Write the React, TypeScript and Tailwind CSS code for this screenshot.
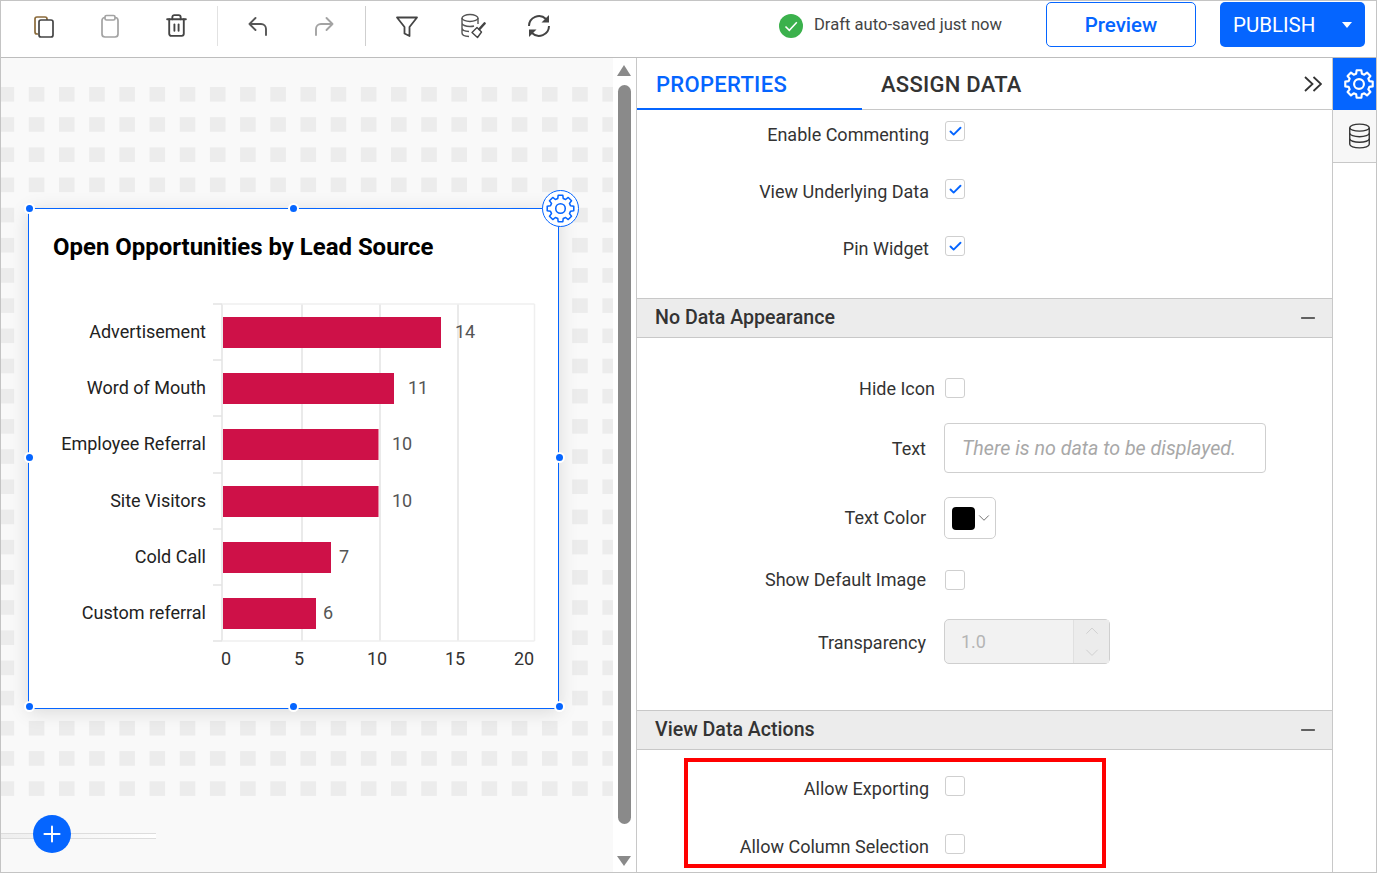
import { Check, ChevronDown, ChevronUp, Minus, Plus, Trash2 } from "lucide-react";

const bars = [
  { label: "Advertisement", value: 14, y: 317, right: 441, tx: 455 },
  { label: "Word of Mouth", value: 11, y: 373, right: 394, tx: 408 },
  { label: "Employee Referral", value: 10, y: 429, right: 378.5, tx: 392 },
  { label: "Site Visitors", value: 10, y: 486, right: 378.5, tx: 392 },
  { label: "Cold Call", value: 7, y: 542, right: 331, tx: 339 },
  { label: "Custom referral", value: 6, y: 598, right: 316, tx: 323 },
];

const ticks = [
  { t: "0", x: 226 },
  { t: "5", x: 299 },
  { t: "10", x: 377 },
  { t: "15", x: 455 },
  { t: "20", x: 524 },
];

// 8 tooth cog outline, shared by the widget button and the side tab
function gearPath(c: number, outer: number, inner: number) {
  const pts: string[] = [];
  const n = 8;
  for (let i = 0; i < n; i++) {
    const a = (i * Math.PI * 2) / n - Math.PI / 2;
    const step = Math.PI / n;
    const list: [number, number][] = [
      [inner, a - step * 0.68],
      [outer, a - step * 0.44],
      [outer, a + step * 0.44],
      [inner, a + step * 0.68],
    ];
    for (const [r, t] of list) {
      pts.push(`${(c + r * Math.cos(t)).toFixed(2)} ${(c + r * Math.sin(t)).toFixed(2)}`);
    }
  }
  return "M" + pts.join("L") + "Z";
}

function Gear({ size, color, stroke }: { size: number; color: string; stroke: number }) {
  return (
    <svg width={size} height={size} viewBox="0 0 28 28" fill="none" stroke={color} strokeWidth={stroke} strokeLinejoin="round">
      <path d={gearPath(14, 13, 10)} />
      <circle cx="14" cy="14" r="4.6" />
    </svg>
  );
}

function Box({ checked }: { checked?: boolean }) {
  return (
    <span className="flex h-[20px] w-[20px] shrink-0 items-center justify-center rounded-[3px] border border-[#cfcfcf] bg-white">
      {checked && <Check size={15} strokeWidth={3} className="text-[#0565ff]" />}
    </span>
  );
}

function SectionHead({ title }: { title: string }) {
  return (
    <div className="flex h-[40px] items-center justify-between border-y border-[#c8c8c8] bg-[#ececec] pl-[18px] pr-[13px]">
      <span className="text-[19.6px] font-medium text-[#333]">{title}</span>
      <Minus size={22} strokeWidth={1.4} className="text-[#333]" />
    </div>
  );
}

function ToolIcon({ children }: { children: React.ReactNode }) {
  return <div className="flex h-full w-[66px] items-center justify-center">{children}</div>;
}

function Handle({ className }: { className: string }) {
  return <span className={"absolute h-[11px] w-[11px] rounded-full border-2 border-white bg-[#0565ff] " + className} />;
}

export default function App() {
  return (
    <div className="flex h-[873px] w-[1377px] flex-col overflow-hidden border border-[#c4c4c4] bg-white font-['Roboto',sans-serif] text-[#333]">
      {/* toolbar */}
      <header className="flex h-[57px] shrink-0 items-center border-b border-[#bdbdbd] pb-[7px] pl-[10px]">
        <ToolIcon>
          <svg width="24" height="24" viewBox="0 0 24 24" fill="none" stroke="#444" strokeWidth="1.7" strokeLinejoin="round">
            <path d="M6 20H5a2 2 0 0 1-2-2V5a2 2 0 0 1 2-2h8a2 2 0 0 1 2 2v1" stroke="#8a6a3a" />
            <rect x="7" y="6" width="14" height="17" rx="2" />
          </svg>
        </ToolIcon>
        <ToolIcon>
          <svg width="24" height="24" viewBox="0 0 24 24" fill="none" stroke="#a3a3a3" strokeWidth="1.7" strokeLinejoin="round">
            <rect x="4" y="3.5" width="16" height="19.5" rx="3" />
            <rect x="7" y="1.5" width="10" height="4.5" rx="1.5" fill="#fff" />
          </svg>
        </ToolIcon>
        <ToolIcon>
          <Trash2 size={25} strokeWidth={1.8} className="text-[#444]" />
        </ToolIcon>
        <div className="ml-[8px] mr-[7px] h-[40px] w-px bg-[#e2e2e2]" />
        <ToolIcon>
          <svg width="24" height="24" viewBox="0 0 24 24" fill="none" stroke="#555" strokeWidth="1.9" strokeLinecap="round" strokeLinejoin="round">
            <path d="M9.5 4L3.5 10l6 6M3.5 10H15a5 5 0 0 1 5 5v6" />
          </svg>
        </ToolIcon>
        <ToolIcon>
          <svg width="24" height="24" viewBox="0 0 24 24" fill="none" stroke="#a3a3a3" strokeWidth="1.9" strokeLinecap="round" strokeLinejoin="round">
            <path d="M14.5 4l6 6-6 6M20.5 10H9a5 5 0 0 0-5 5v6" />
          </svg>
        </ToolIcon>
        <div className="mx-[8px] h-[40px] w-px bg-[#cfcfcf]" />
        <ToolIcon>
          <svg width="24" height="24" viewBox="0 0 24 24" fill="none" stroke="#444" strokeWidth="1.8" strokeLinejoin="round">
            <path d="M2 3.5h20L14.5 13v9l-5-2.5V13Z" />
          </svg>
        </ToolIcon>
        <ToolIcon>
          <svg width="26" height="26" viewBox="0 0 26 26" fill="none" stroke="#555" strokeWidth="1.4" strokeLinejoin="round">
            <ellipse cx="10" cy="5" rx="8" ry="3.5" />
            <path d="M2 5v15c0 2 3 3.3 7 3.5M18 5v6M2 10c0 2 3.5 3.5 8 3.5 1.5 0 3-.2 4-.5M2 15c0 2 3 3.3 7 3.5" />
            <path d="M24.5 10.5L19.5 16" stroke="#444" strokeWidth="2.6" strokeLinecap="round" />
            <path d="M17 14.5l4.5 4.5-4 5.5-5.5-5Z" stroke="#444" />
          </svg>
        </ToolIcon>
        <ToolIcon>
          <svg width="26" height="26" viewBox="0 0 26 26" fill="none" stroke="#444" strokeWidth="2">
            <path d="M3 13a10 10 0 0 1 17-7" />
            <path d="M23 13a10 10 0 0 1-17 7" />
            <path d="M23 2v7.5h-7.5Z" fill="#444" stroke="none" />
            <path d="M3 24v-7.5h7.5Z" fill="#444" stroke="none" />
          </svg>
        </ToolIcon>
        <div className="ml-auto flex items-center">
          <svg width="24" height="24" viewBox="0 0 24 24" className="mr-[11px]">
            <circle cx="12" cy="12" r="12" fill="#3bb14c" />
            <path d="M6.5 12.5l3.8 3.8 7.5-8" fill="none" stroke="#fff" strokeWidth="1.5" />
          </svg>
          <span className="mr-[44px] text-[16.6px] text-[#444]">Draft auto-saved just now</span>
          <button className="mb-[2px] mr-[24px] h-[45px] w-[150px] rounded-[5px] border border-[#0565ff] bg-white pt-[1px] text-[20.5px] font-medium text-[#0565ff]">
            Preview
          </button>
          <button className="mb-[2px] mr-[11px] flex h-[45px] w-[145px] items-center rounded-[5px] bg-[#0565ff] pl-[13px] pt-[1px] text-[20.5px] text-white">
            PUBLISH
            <span className="ml-[27px] h-0 w-0 border-x-[5.5px] border-t-[6px] border-x-transparent border-t-white" />
          </button>
        </div>
      </header>

      <div className="flex min-h-0 flex-1">
        {/* canvas */}
        <main className="relative w-[612px] shrink-0 bg-[#f9f9f9]">
          <div className="absolute inset-x-0 top-[29px] h-[713px] bg-[conic-gradient(#ececec_25%,transparent_0)] bg-[length:30.2px_30.2px] bg-[position:-17px_0]" />
          <section className="absolute left-[27px] top-[150px] h-[501px] w-[531px] border border-[#0565ff] bg-white shadow-[0_3px_18px_rgba(0,0,0,0.13)]">
            <h2 className="pl-[24px] pt-[22px] text-[23.95px] font-bold leading-[32px] text-black">
              Open Opportunities by Lead Source
            </h2>
            <svg width="529" height="400" viewBox="29 299 529 400" className="mt-[36px] block" fontFamily="Roboto, sans-serif" fontSize="18">
              <g stroke="#e4e4e4" strokeWidth="1.5">
                <path d="M222 304V641M302 304V641M380 304V641M458 304V641" />
                <path d="M534.5 304V641M222 304H534.5M222 641H534.5" stroke="#efefef" />
                <path d="M213 304H222M213 360H222M213 416H222M213 473H222M213 529H222M213 585H222M213 641H222" stroke="#e4e4e4" />
              </g>
              {bars.map((b) => (
                <g key={b.label}>
                  <rect x="223" y={b.y} width={b.right - 223} height="31" fill="#ce1148" />
                  <text x="206" y={b.y + 21} textAnchor="end" fill="#222">
                    {b.label}
                  </text>
                  <text x={b.tx} y={b.y + 21} fill="#555">
                    {b.value}
                  </text>
                </g>
              ))}
              {ticks.map((t) => (
                <text key={t.t} x={t.x} y="665" textAnchor="middle" fill="#333">
                  {t.t}
                </text>
              ))}
            </svg>
            <Handle className="-left-[5px] -top-[6px]" />
            <Handle className="left-[259px] -top-[6px]" />
            <Handle className="-left-[5px] top-[243px]" />
            <Handle className="-right-[7px] top-[243px]" />
            <Handle className="-left-[5px] -bottom-[4px]" />
            <Handle className="left-[259px] -bottom-[4px]" />
            <Handle className="-right-[7px] -bottom-[4px]" />
            <span className="absolute -right-[21px] -top-[19px] flex h-[37px] w-[37px] items-center justify-center rounded-full border-[1.5px] border-[#0565ff] bg-white">
              <Gear size={29} color="#0565ff" stroke={1.5} />
            </span>
          </section>
          <div className="absolute left-0 top-[775px] h-[6px] w-[155px] border-y border-[#ddd] bg-gradient-to-r from-[#eeeeee] to-white" />
          <button className="absolute left-[32px] top-[757px] flex h-[38px] w-[38px] items-center justify-center rounded-full bg-[#0565ff]">
            <Plus size={26} strokeWidth={1.8} className="text-white" />
          </button>
        </main>

        {/* canvas scrollbar */}
        <div className="relative w-[24px] shrink-0 border-r border-[#c8c8c8] bg-white">
          <span className="absolute left-[4px] top-[7px] h-0 w-0 border-x-[7px] border-b-[11px] border-x-transparent border-b-[#8a8a8a]" />
          <span className="absolute left-[5px] top-[27px] h-[739px] w-[13px] rounded-full bg-[#8a8a8a]" />
          <span className="absolute bottom-[6px] left-[4px] h-0 w-0 border-x-[7px] border-t-[10px] border-x-transparent border-t-[#8a8a8a]" />
        </div>

        {/* properties */}
        <aside className="flex min-w-0 flex-1 flex-col">
          <div className="flex h-[52px] shrink-0 items-stretch border-b border-[#c8c8c8]">
            <div className="-mb-px flex w-[225px] items-center border-b-2 border-[#0565ff] pl-[19px] pt-[2px] text-[22px] font-medium tracking-[0.3px] text-[#0565ff]">
              PROPERTIES
            </div>
            <div className="flex items-center pl-[19px] pt-[1px] text-[22px] font-medium tracking-[0.25px] text-[#333]">ASSIGN DATA</div>
            <div className="ml-auto flex items-center pr-[10px]">
              <svg width="18" height="16" viewBox="0 0 18 16" fill="none" stroke="#333" strokeWidth="1.8">
                <path d="M1 1l7.5 7-7.5 7M9.5 1l7.5 7-7.5 7" />
              </svg>
            </div>
          </div>

          <div className="flex flex-col pt-[11px] text-[18px]">
            <label className="flex h-[20px] items-center">
              <span className="w-[292px] pt-[6px] text-right">Enable Commenting</span>
              <span className="ml-[16px]"><Box checked /></span>
            </label>
            <label className="mt-[38px] flex h-[20px] items-center">
              <span className="w-[292px] pt-[4px] text-right">View Underlying Data</span>
              <span className="ml-[16px]"><Box checked /></span>
            </label>
            <label className="mt-[37px] flex h-[20px] items-center">
              <span className="w-[292px] pt-[4px] text-right">Pin Widget</span>
              <span className="ml-[16px]"><Box checked /></span>
            </label>
          </div>

          <div className="mt-[42px]">
            <SectionHead title="No Data Appearance" />
          </div>

          <div className="flex flex-col text-[18px]">
            <label className="mt-[40px] flex h-[20px] items-center">
              <span className="w-[298px] text-right">Hide Icon</span>
              <span className="ml-[10px]"><Box /></span>
            </label>
            <div className="mt-[25px] flex h-[50px] items-center">
              <span className="w-[289px] text-right">Text</span>
              <div className="ml-[18px] flex h-[50px] w-[322px] items-center rounded-[4px] border border-[#cfcfcf] pl-[17px] pt-[1px] text-[19.65px] italic text-[#a8a8a8]">
                There is no data to be displayed.
              </div>
            </div>
            <div className="mt-[24px] flex h-[42px] items-center">
              <span className="w-[289px] pb-[1px] text-right">Text Color</span>
              <div className="ml-[18px] flex h-[42px] w-[52px] items-center rounded-[5px] border border-[#cfcfcf] pl-[7px]">
                <span className="h-[23px] w-[23px] rounded-[4px] bg-black" />
                <ChevronDown size={18} strokeWidth={1.1} className="text-[#555]" />
              </div>
            </div>
            <label className="mt-[31px] flex h-[20px] items-center">
              <span className="w-[289px] pb-[1px] text-right">Show Default Image</span>
              <span className="ml-[19px]"><Box /></span>
            </label>
            <div className="mt-[29px] flex h-[45px] items-center">
              <span className="w-[289px] pt-[2px] text-right">Transparency</span>
              <div className="ml-[18px] flex h-[45px] w-[166px] rounded-[5px] border border-[#cfcfcf] bg-[#f2f2f2]">
                <span className="flex flex-1 items-center pl-[16px] text-[#b5b5b5]">1.0</span>
                <span className="flex w-[36px] flex-col items-center justify-center border-l border-[#e0e0e0] bg-[#ececec] text-[#cdcdcd]">
                  <ChevronUp size={22} strokeWidth={1} />
                  <ChevronDown size={22} strokeWidth={1} />
                </span>
              </div>
            </div>
          </div>

          <div className="mt-[46px]">
            <SectionHead title="View Data Actions" />
          </div>

          <div className="ml-[47px] mt-[8px] flex h-[110px] w-[422px] flex-col border-4 border-[#ff0000] text-[18px]">
            <label className="mt-[14px] flex h-[20px] items-center">
              <span className="w-[241px] pt-[4px] text-right">Allow Exporting</span>
              <span className="ml-[16px]"><Box /></span>
            </label>
            <label className="mt-[38px] flex h-[20px] items-center">
              <span className="w-[241px] pt-[4px] text-right">Allow Column Selection</span>
              <span className="ml-[16px]"><Box /></span>
            </label>
          </div>
        </aside>

        {/* side tabs */}
        <nav className="w-[44px] shrink-0 border-l border-[#c8c8c8] bg-white">
          <div className="flex h-[52px] items-center justify-center bg-[#0565ff] pl-[8px]">
            <Gear size={30} color="#fff" stroke={2} />
          </div>
          <div className="flex h-[53px] items-center justify-center border-b border-[#c8c8c8] bg-[#f7f7f7] pl-[9px]">
            <svg width="23" height="26" viewBox="0 0 24 28" fill="none" stroke="#333" strokeWidth="1.5">
              <ellipse cx="12" cy="5" rx="10.5" ry="3.8" />
              <path d="M1.5 5v18c0 2 4.7 3.8 10.5 3.8s10.5-1.8 10.5-3.8V5" />
              <path d="M1.5 11c0 2 4.7 3.8 10.5 3.8s10.5-1.8 10.5-3.8M1.5 17c0 2 4.7 3.8 10.5 3.8s10.5-1.8 10.5-3.8" />
            </svg>
          </div>
        </nav>
      </div>
    </div>
  );
}
